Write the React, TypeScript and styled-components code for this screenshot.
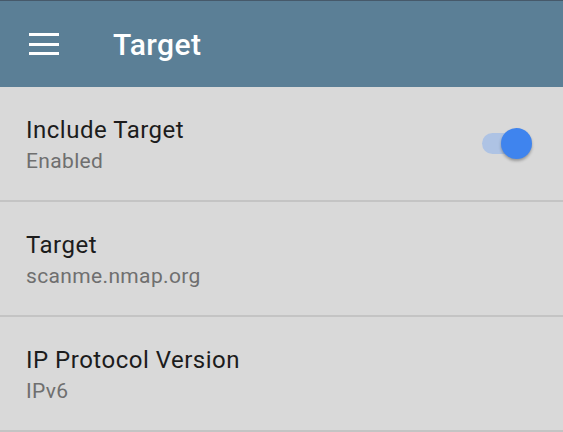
import React, { useState } from 'react';
import styled, { createGlobalStyle } from 'styled-components';

const GlobalStyle = createGlobalStyle`
  html, body {
    margin: 0;
    padding: 0;
    background: #d9d9d9;
    font-family: Roboto, "Liberation Sans", sans-serif;
  }
`;

const Page = styled.div`
  width: 563px;
  height: 432px;
  overflow: hidden;
  background: #d9d9d9;
  display: flex;
  flex-direction: column;
`;

const AppBar = styled.header`
  height: 87px;
  flex-shrink: 0;
  background: #5b7f96;
  border-top: 1px solid #46596a;
  display: flex;
  align-items: center;
  box-sizing: border-box;
`;

const MenuButton = styled.button`
  width: 30px;
  height: 22px;
  margin-left: 29px;
  padding: 0;
  border: none;
  background: transparent;
  display: flex;
  flex-direction: column;
  justify-content: space-between;
  cursor: pointer;
`;

const MenuLine = styled.span`
  display: block;
  height: 3px;
  width: 100%;
  background: #ffffff;
`;

const Title = styled.h1`
  margin: 0 0 0 54px;
  font-size: 30px;
  font-weight: 500;
  color: #ffffff;
  letter-spacing: 0.4px;
`;

const Row = styled.div`
  flex-shrink: 0;
  border-bottom: 2px solid #c4c4c4;
  display: flex;
  align-items: flex-start;
  padding: 29px 36px 0 26px;
  height: 84px;
`;

const Texts = styled.div`
  flex: 1;
  display: flex;
  flex-direction: column;
  gap: 4px;
`;

const Label = styled.div`
  font-size: 24px;
  color: #1c1c1c;
  line-height: 28px;
  letter-spacing: 0.5px;
`;

const Value = styled.div`
  font-size: 21px;
  color: #6f6f6f;
  line-height: 26px;
  letter-spacing: 0.35px;
`;

const Switch = styled.button<{ $on: boolean }>`
  position: relative;
  align-self: center;
  margin-top: -29px;
  width: 45px;
  height: 21px;
  padding: 0;
  border: none;
  border-radius: 11px;
  background: ${p => (p.$on ? '#aec3e4' : '#b9b9b9')};
  cursor: pointer;
`;

const Thumb = styled.span<{ $on: boolean }>`
  position: absolute;
  top: 50%;
  left: ${p => (p.$on ? '19px' : '-5px')};
  width: 31px;
  height: 31px;
  margin-top: -16px;
  border-radius: 50%;
  background: ${p => (p.$on ? '#3f84ee' : '#f1f1f1')};
  box-shadow: 0 2px 3px rgba(0, 0, 0, 0.3);
`;

interface Setting {
  label: string;
  value: string;
  toggle?: boolean;
}

const settings: Setting[] = [
  { label: 'Include Target', value: 'Enabled', toggle: true },
  { label: 'Target', value: 'scanme.nmap.org' },
  { label: 'IP Protocol Version', value: 'IPv6' },
];

const App: React.FC = () => {
  const [enabled, setEnabled] = useState(true);

  return (
    <Page>
      <GlobalStyle />
      <AppBar>
        <MenuButton aria-label="menu">
          <MenuLine />
          <MenuLine />
          <MenuLine />
        </MenuButton>
        <Title>Target</Title>
      </AppBar>
      {settings.map(s => (
        <Row key={s.label}>
          <Texts>
            <Label>{s.label}</Label>
            <Value>{s.toggle ? (enabled ? 'Enabled' : 'Disabled') : s.value}</Value>
          </Texts>
          {s.toggle && (
            <Switch $on={enabled} onClick={() => setEnabled(!enabled)}>
              <Thumb $on={enabled} />
            </Switch>
          )}
        </Row>
      ))}
    </Page>
  );
};

export default App;
